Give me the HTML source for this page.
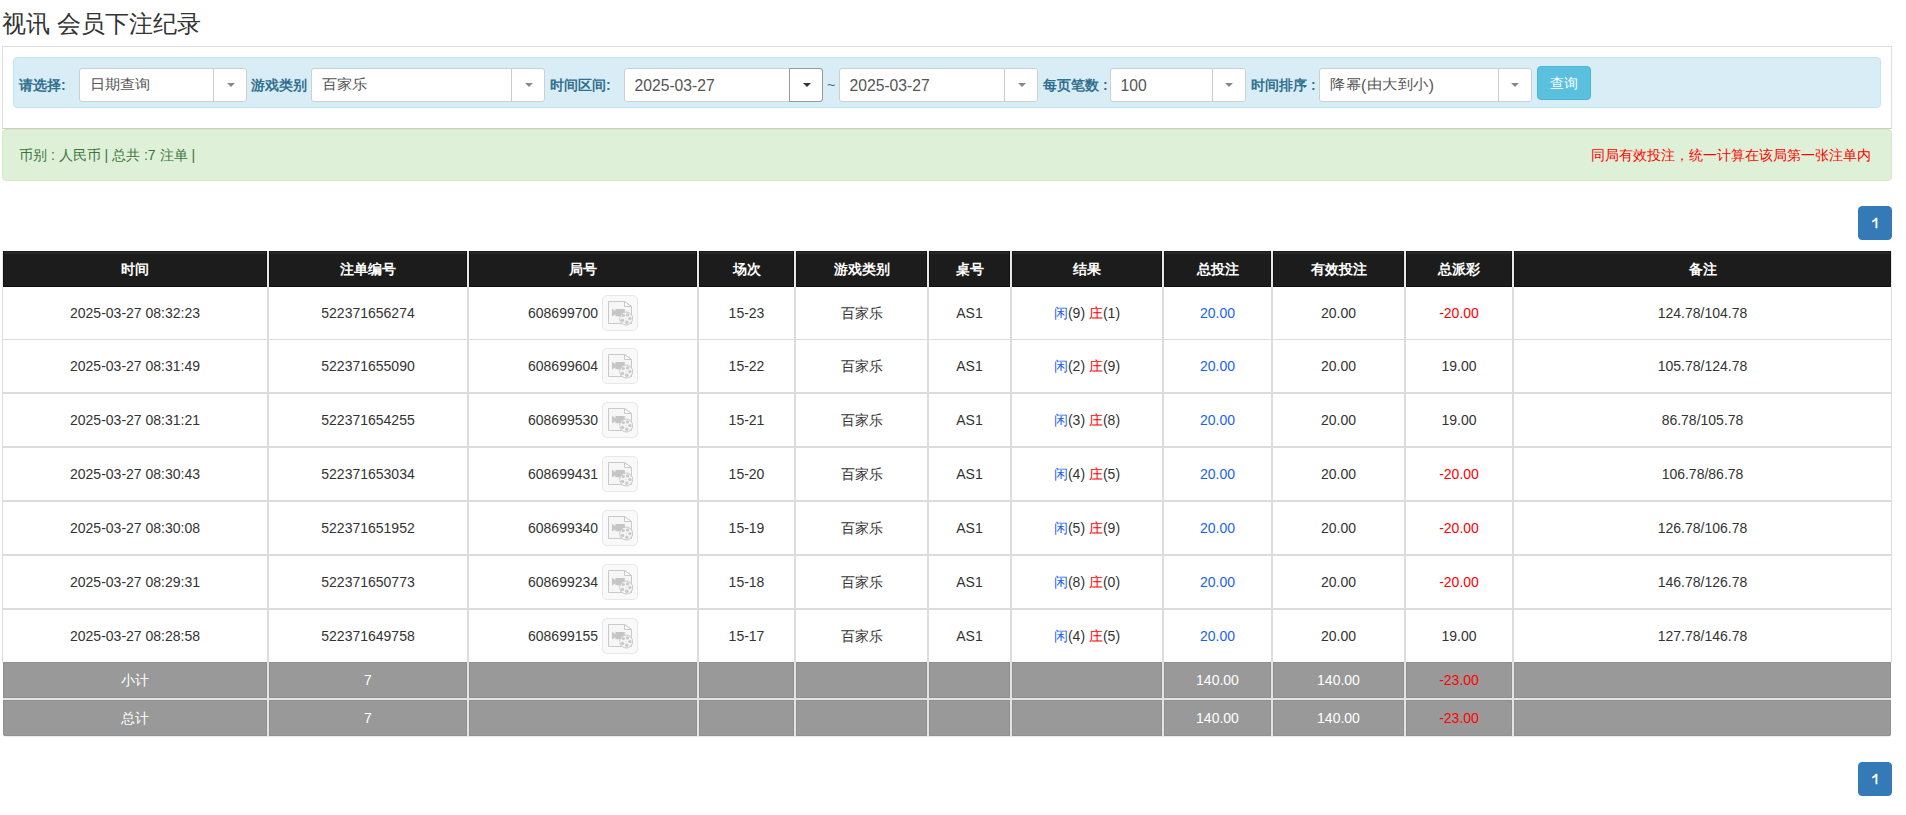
<!DOCTYPE html>
<html><head><meta charset="utf-8">
<style>
*{box-sizing:border-box}
html,body{margin:0;padding:0;background:#fff}
body{width:1906px;height:815px;position:relative;overflow:hidden;font-family:"Liberation Sans",sans-serif;font-size:14px;color:#333}
.abs{position:absolute}
#title{left:2px;top:7px;font-size:24px;line-height:34px;color:#333;white-space:nowrap}
#panel{left:2px;top:46px;width:1890px;height:83px;border:1px solid #ddd;border-bottom-color:#ccc}
#info{left:13px;top:57px;width:1868px;height:51px;background:#d9edf7;border:1px solid #bce8f1;border-radius:4px}
.lbl{position:absolute;top:77px;font-size:14px;font-weight:bold;color:#31708f;line-height:17px;white-space:nowrap}
.sel{position:absolute;top:68px;height:34px;background:#fff;border:1px solid #cfcfcf;border-radius:3px}
.sel .t{position:absolute;left:9.5px;top:0.5px;line-height:32px;font-size:15.7px;color:#555;white-space:nowrap}
.sel .cj{font-size:15px;display:inline-block;transform:translateY(-1.5px) scaleY(.92)}
.sel .d{position:absolute;top:-1px;bottom:-1px;width:1px;background:#ccc}
.sel .a{position:absolute;top:14px;width:0;height:0;border-left:4px solid transparent;border-right:4px solid transparent;border-top:4px solid #888}
.fb{position:absolute;left:164px;top:-1px;width:34px;height:34px;border:1px solid #9a9a9a;border-radius:0 3px 3px 0}
#btnq{left:1537px;top:66px;width:54px;height:34px;background:#5bc0de;border:1px solid #46b8da;border-radius:4px;color:#fff;font-size:14px;line-height:32px;text-align:center}
#succ{left:2px;top:129px;width:1890px;height:52px;background:#dff0d8;border:1px solid #d6e9c6;border-radius:4px;color:#3c763d}
#succ .l{position:absolute;left:16px;top:17px;line-height:16px;white-space:nowrap}
#succ .r{position:absolute;right:20px;top:17px;line-height:16px;color:#f00;white-space:nowrap}
.pg{position:absolute;left:1858px;width:34px;height:34px;background:#337ab7;border:1px solid #337ab7;border-radius:4px;color:#fff;font-weight:normal;-webkit-text-stroke:0.4px #fff;text-align:center;line-height:32px;font-size:14px}
.c{position:absolute;text-align:center;white-space:nowrap;font-size:14px}
.th{background:#1c1c1c;color:#fff;font-weight:bold;box-shadow:inset 1px 0 0 #141414,inset -1px 0 0 #141414,inset 0 1px 0 #1c1c1c,inset 0 3px 0 #272727,inset 0 -1px 0 #0e0e0e}
.td{background:#fff;color:#333}
.tf{background:#999;color:#fff;box-shadow:inset 1px 0 0 #909090,inset -1px 0 0 #909090,inset 0 1px 0 #8f8f8f,inset 0 -1px 0 #909090}
.bl{color:#1a62f2}
.rd{color:#f00}
.num{position:absolute;left:59px;top:0}
.ib{position:absolute;left:133px;top:8px;width:36px;height:36px;background:#f9f9f9;border:1px solid #e8e8e8;border-radius:5px;line-height:0}
</style></head><body>
<div id="title" class="abs">视讯 会员下注纪录</div>
<div id="panel" class="abs"></div>
<div id="info" class="abs"></div>
<div class="lbl" style="left:19px">请选择:</div>
<div class="sel" style="left:79px;width:168px"><span class="t cj">日期查询</span><span class="d" style="left:133px"></span><span class="a" style="left:147px"></span></div>
<div class="lbl" style="left:251px">游戏类别</div>
<div class="sel" style="left:311px;width:234px"><span class="t cj">百家乐</span><span class="d" style="left:199px"></span><span class="a" style="left:213px"></span></div>
<div class="lbl" style="left:550px">时间区间:</div>
<div class="sel" style="left:624px;width:199px"><span class="t">2025-03-27</span><span class="fb"></span><span class="a" style="left:178px;border-top-color:#333"></span></div>
<div class="abs" style="left:827px;top:77px;color:#31708f;font-size:14px;line-height:17px">~</div>
<div class="sel" style="left:839px;width:199px"><span class="t">2025-03-27</span><span class="d" style="left:164px"></span><span class="a" style="left:178px"></span></div>
<div class="lbl" style="left:1043px">每页笔数 :</div>
<div class="sel" style="left:1110px;width:136px"><span class="t">100</span><span class="d" style="left:101px"></span><span class="a" style="left:114px"></span></div>
<div class="lbl" style="left:1251px">时间排序 :</div>
<div class="sel" style="left:1319px;width:213px"><span class="t" style="left:10px;letter-spacing:0.5px"><span class="cj">降幂</span>(<span class="cj">由大到小</span>)</span><span class="d" style="left:178px"></span><span class="a" style="left:191px"></span></div>
<div id="btnq" class="abs">查询</div>
<div id="succ" class="abs"><span class="l">币别 : 人民币 | 总共 :7 注单 |</span><span class="r">同局有效投注，统一计算在该局第一张注单内</span></div>
<div class="pg" style="top:206px"><svg width="34" height="34" style="position:absolute;left:-1px;top:-1px"><path d="M17.7 11.8H19.4V22.2H17.5V14.8Q16.2 15.9 14.2 16.4V14.8Q16.4 14 17.7 11.8Z" fill="#fff"/></svg></div>
<!--TABLE-->
<div class="abs" style="left:2px;top:251px;width:1890px;height:36px;background:#e8e8e8"></div>
<div class="abs" style="left:2px;top:287px;width:1890px;height:375px;background:#dcdcdc"></div>
<div class="abs" style="left:3px;top:662px;width:1888px;height:74px;background:#e4e4e4;border-radius:0 0 3px 3px;box-shadow:0 1px 1px rgba(0,0,0,.08)"></div>
<div class="c th" style="left:3px;width:264px;top:251px;height:36px;line-height:36px">时间</div>
<div class="c th" style="left:269px;width:198px;top:251px;height:36px;line-height:36px">注单编号</div>
<div class="c th" style="left:469px;width:228px;top:251px;height:36px;line-height:36px">局号</div>
<div class="c th" style="left:699px;width:95px;top:251px;height:36px;line-height:36px">场次</div>
<div class="c th" style="left:796px;width:131px;top:251px;height:36px;line-height:36px">游戏类别</div>
<div class="c th" style="left:929px;width:81px;top:251px;height:36px;line-height:36px">桌号</div>
<div class="c th" style="left:1012px;width:150px;top:251px;height:36px;line-height:36px">结果</div>
<div class="c th" style="left:1164px;width:107px;top:251px;height:36px;line-height:36px">总投注</div>
<div class="c th" style="left:1273px;width:131px;top:251px;height:36px;line-height:36px">有效投注</div>
<div class="c th" style="left:1406px;width:106px;top:251px;height:36px;line-height:36px">总派彩</div>
<div class="c th" style="left:1514px;width:377px;top:251px;height:36px;line-height:36px">备注</div>
<div class="c td" style="left:3px;width:264px;top:287px;height:52px;line-height:52px">2025-03-27 08:32:23</div>
<div class="c td" style="left:269px;width:198px;top:287px;height:52px;line-height:52px">522371656274</div>
<div class="c td" style="left:469px;width:228px;top:287px;height:52px;line-height:52px"><span class="num">608699700</span><span class="ib"><svg width="28" height="28" viewBox="0 0 28 28" style="position:absolute;left:5px;top:5px"><path d="M0.5 0.5H16.5L23.5 5.5V22.5H0.5Z" fill="#f6f6f6" stroke="#c9c9c9" stroke-width="1"/><path d="M16.5 0.5V5.5H23.5Z" fill="#fdfdfd" stroke="#c9c9c9" stroke-width="1" stroke-linejoin="round"/><path d="M4 8H4.6L7.4 10.2V8H16.8V15.2H7.4V13.2L4.6 15.2H4Z" fill="#c5c5c5"/><circle cx="18.2" cy="17.5" r="6.5" fill="#f6f6f6" stroke="#c8c8c8" stroke-width="1"/><circle cx="15.3" cy="14.6" r="1.7" fill="#c9c9c9"/><circle cx="19.6" cy="13.9" r="1.7" fill="#c9c9c9"/><circle cx="21.9" cy="17.6" r="1.7" fill="#c9c9c9"/><circle cx="18.8" cy="21.2" r="1.7" fill="#c9c9c9"/><circle cx="14.6" cy="19.4" r="1.7" fill="#c9c9c9"/><circle cx="18" cy="17.5" r="0.6" fill="#cfcfcf"/></svg></span></div>
<div class="c td" style="left:699px;width:95px;top:287px;height:52px;line-height:52px">15-23</div>
<div class="c td" style="left:796px;width:131px;top:287px;height:52px;line-height:52px">百家乐</div>
<div class="c td" style="left:929px;width:81px;top:287px;height:52px;line-height:52px">AS1</div>
<div class="c td" style="left:1012px;width:150px;top:287px;height:52px;line-height:52px"><span class="bl">闲</span>(9) <span class="rd">庄</span>(1)</div>
<div class="c td" style="left:1164px;width:107px;top:287px;height:52px;line-height:52px"><span class="bl">20.00</span></div>
<div class="c td" style="left:1273px;width:131px;top:287px;height:52px;line-height:52px">20.00</div>
<div class="c td" style="left:1406px;width:106px;top:287px;height:52px;line-height:52px"><span class="rd">-20.00</span></div>
<div class="c td" style="left:1514px;width:377px;top:287px;height:52px;line-height:52px">124.78/104.78</div>
<div class="c td" style="left:3px;width:264px;top:340px;height:52px;line-height:52px">2025-03-27 08:31:49</div>
<div class="c td" style="left:269px;width:198px;top:340px;height:52px;line-height:52px">522371655090</div>
<div class="c td" style="left:469px;width:228px;top:340px;height:52px;line-height:52px"><span class="num">608699604</span><span class="ib"><svg width="28" height="28" viewBox="0 0 28 28" style="position:absolute;left:5px;top:5px"><path d="M0.5 0.5H16.5L23.5 5.5V22.5H0.5Z" fill="#f6f6f6" stroke="#c9c9c9" stroke-width="1"/><path d="M16.5 0.5V5.5H23.5Z" fill="#fdfdfd" stroke="#c9c9c9" stroke-width="1" stroke-linejoin="round"/><path d="M4 8H4.6L7.4 10.2V8H16.8V15.2H7.4V13.2L4.6 15.2H4Z" fill="#c5c5c5"/><circle cx="18.2" cy="17.5" r="6.5" fill="#f6f6f6" stroke="#c8c8c8" stroke-width="1"/><circle cx="15.3" cy="14.6" r="1.7" fill="#c9c9c9"/><circle cx="19.6" cy="13.9" r="1.7" fill="#c9c9c9"/><circle cx="21.9" cy="17.6" r="1.7" fill="#c9c9c9"/><circle cx="18.8" cy="21.2" r="1.7" fill="#c9c9c9"/><circle cx="14.6" cy="19.4" r="1.7" fill="#c9c9c9"/><circle cx="18" cy="17.5" r="0.6" fill="#cfcfcf"/></svg></span></div>
<div class="c td" style="left:699px;width:95px;top:340px;height:52px;line-height:52px">15-22</div>
<div class="c td" style="left:796px;width:131px;top:340px;height:52px;line-height:52px">百家乐</div>
<div class="c td" style="left:929px;width:81px;top:340px;height:52px;line-height:52px">AS1</div>
<div class="c td" style="left:1012px;width:150px;top:340px;height:52px;line-height:52px"><span class="bl">闲</span>(2) <span class="rd">庄</span>(9)</div>
<div class="c td" style="left:1164px;width:107px;top:340px;height:52px;line-height:52px"><span class="bl">20.00</span></div>
<div class="c td" style="left:1273px;width:131px;top:340px;height:52px;line-height:52px">20.00</div>
<div class="c td" style="left:1406px;width:106px;top:340px;height:52px;line-height:52px">19.00</div>
<div class="c td" style="left:1514px;width:377px;top:340px;height:52px;line-height:52px">105.78/124.78</div>
<div class="c td" style="left:3px;width:264px;top:394px;height:52px;line-height:52px">2025-03-27 08:31:21</div>
<div class="c td" style="left:269px;width:198px;top:394px;height:52px;line-height:52px">522371654255</div>
<div class="c td" style="left:469px;width:228px;top:394px;height:52px;line-height:52px"><span class="num">608699530</span><span class="ib"><svg width="28" height="28" viewBox="0 0 28 28" style="position:absolute;left:5px;top:5px"><path d="M0.5 0.5H16.5L23.5 5.5V22.5H0.5Z" fill="#f6f6f6" stroke="#c9c9c9" stroke-width="1"/><path d="M16.5 0.5V5.5H23.5Z" fill="#fdfdfd" stroke="#c9c9c9" stroke-width="1" stroke-linejoin="round"/><path d="M4 8H4.6L7.4 10.2V8H16.8V15.2H7.4V13.2L4.6 15.2H4Z" fill="#c5c5c5"/><circle cx="18.2" cy="17.5" r="6.5" fill="#f6f6f6" stroke="#c8c8c8" stroke-width="1"/><circle cx="15.3" cy="14.6" r="1.7" fill="#c9c9c9"/><circle cx="19.6" cy="13.9" r="1.7" fill="#c9c9c9"/><circle cx="21.9" cy="17.6" r="1.7" fill="#c9c9c9"/><circle cx="18.8" cy="21.2" r="1.7" fill="#c9c9c9"/><circle cx="14.6" cy="19.4" r="1.7" fill="#c9c9c9"/><circle cx="18" cy="17.5" r="0.6" fill="#cfcfcf"/></svg></span></div>
<div class="c td" style="left:699px;width:95px;top:394px;height:52px;line-height:52px">15-21</div>
<div class="c td" style="left:796px;width:131px;top:394px;height:52px;line-height:52px">百家乐</div>
<div class="c td" style="left:929px;width:81px;top:394px;height:52px;line-height:52px">AS1</div>
<div class="c td" style="left:1012px;width:150px;top:394px;height:52px;line-height:52px"><span class="bl">闲</span>(3) <span class="rd">庄</span>(8)</div>
<div class="c td" style="left:1164px;width:107px;top:394px;height:52px;line-height:52px"><span class="bl">20.00</span></div>
<div class="c td" style="left:1273px;width:131px;top:394px;height:52px;line-height:52px">20.00</div>
<div class="c td" style="left:1406px;width:106px;top:394px;height:52px;line-height:52px">19.00</div>
<div class="c td" style="left:1514px;width:377px;top:394px;height:52px;line-height:52px">86.78/105.78</div>
<div class="c td" style="left:3px;width:264px;top:448px;height:52px;line-height:52px">2025-03-27 08:30:43</div>
<div class="c td" style="left:269px;width:198px;top:448px;height:52px;line-height:52px">522371653034</div>
<div class="c td" style="left:469px;width:228px;top:448px;height:52px;line-height:52px"><span class="num">608699431</span><span class="ib"><svg width="28" height="28" viewBox="0 0 28 28" style="position:absolute;left:5px;top:5px"><path d="M0.5 0.5H16.5L23.5 5.5V22.5H0.5Z" fill="#f6f6f6" stroke="#c9c9c9" stroke-width="1"/><path d="M16.5 0.5V5.5H23.5Z" fill="#fdfdfd" stroke="#c9c9c9" stroke-width="1" stroke-linejoin="round"/><path d="M4 8H4.6L7.4 10.2V8H16.8V15.2H7.4V13.2L4.6 15.2H4Z" fill="#c5c5c5"/><circle cx="18.2" cy="17.5" r="6.5" fill="#f6f6f6" stroke="#c8c8c8" stroke-width="1"/><circle cx="15.3" cy="14.6" r="1.7" fill="#c9c9c9"/><circle cx="19.6" cy="13.9" r="1.7" fill="#c9c9c9"/><circle cx="21.9" cy="17.6" r="1.7" fill="#c9c9c9"/><circle cx="18.8" cy="21.2" r="1.7" fill="#c9c9c9"/><circle cx="14.6" cy="19.4" r="1.7" fill="#c9c9c9"/><circle cx="18" cy="17.5" r="0.6" fill="#cfcfcf"/></svg></span></div>
<div class="c td" style="left:699px;width:95px;top:448px;height:52px;line-height:52px">15-20</div>
<div class="c td" style="left:796px;width:131px;top:448px;height:52px;line-height:52px">百家乐</div>
<div class="c td" style="left:929px;width:81px;top:448px;height:52px;line-height:52px">AS1</div>
<div class="c td" style="left:1012px;width:150px;top:448px;height:52px;line-height:52px"><span class="bl">闲</span>(4) <span class="rd">庄</span>(5)</div>
<div class="c td" style="left:1164px;width:107px;top:448px;height:52px;line-height:52px"><span class="bl">20.00</span></div>
<div class="c td" style="left:1273px;width:131px;top:448px;height:52px;line-height:52px">20.00</div>
<div class="c td" style="left:1406px;width:106px;top:448px;height:52px;line-height:52px"><span class="rd">-20.00</span></div>
<div class="c td" style="left:1514px;width:377px;top:448px;height:52px;line-height:52px">106.78/86.78</div>
<div class="c td" style="left:3px;width:264px;top:502px;height:52px;line-height:52px">2025-03-27 08:30:08</div>
<div class="c td" style="left:269px;width:198px;top:502px;height:52px;line-height:52px">522371651952</div>
<div class="c td" style="left:469px;width:228px;top:502px;height:52px;line-height:52px"><span class="num">608699340</span><span class="ib"><svg width="28" height="28" viewBox="0 0 28 28" style="position:absolute;left:5px;top:5px"><path d="M0.5 0.5H16.5L23.5 5.5V22.5H0.5Z" fill="#f6f6f6" stroke="#c9c9c9" stroke-width="1"/><path d="M16.5 0.5V5.5H23.5Z" fill="#fdfdfd" stroke="#c9c9c9" stroke-width="1" stroke-linejoin="round"/><path d="M4 8H4.6L7.4 10.2V8H16.8V15.2H7.4V13.2L4.6 15.2H4Z" fill="#c5c5c5"/><circle cx="18.2" cy="17.5" r="6.5" fill="#f6f6f6" stroke="#c8c8c8" stroke-width="1"/><circle cx="15.3" cy="14.6" r="1.7" fill="#c9c9c9"/><circle cx="19.6" cy="13.9" r="1.7" fill="#c9c9c9"/><circle cx="21.9" cy="17.6" r="1.7" fill="#c9c9c9"/><circle cx="18.8" cy="21.2" r="1.7" fill="#c9c9c9"/><circle cx="14.6" cy="19.4" r="1.7" fill="#c9c9c9"/><circle cx="18" cy="17.5" r="0.6" fill="#cfcfcf"/></svg></span></div>
<div class="c td" style="left:699px;width:95px;top:502px;height:52px;line-height:52px">15-19</div>
<div class="c td" style="left:796px;width:131px;top:502px;height:52px;line-height:52px">百家乐</div>
<div class="c td" style="left:929px;width:81px;top:502px;height:52px;line-height:52px">AS1</div>
<div class="c td" style="left:1012px;width:150px;top:502px;height:52px;line-height:52px"><span class="bl">闲</span>(5) <span class="rd">庄</span>(9)</div>
<div class="c td" style="left:1164px;width:107px;top:502px;height:52px;line-height:52px"><span class="bl">20.00</span></div>
<div class="c td" style="left:1273px;width:131px;top:502px;height:52px;line-height:52px">20.00</div>
<div class="c td" style="left:1406px;width:106px;top:502px;height:52px;line-height:52px"><span class="rd">-20.00</span></div>
<div class="c td" style="left:1514px;width:377px;top:502px;height:52px;line-height:52px">126.78/106.78</div>
<div class="c td" style="left:3px;width:264px;top:556px;height:52px;line-height:52px">2025-03-27 08:29:31</div>
<div class="c td" style="left:269px;width:198px;top:556px;height:52px;line-height:52px">522371650773</div>
<div class="c td" style="left:469px;width:228px;top:556px;height:52px;line-height:52px"><span class="num">608699234</span><span class="ib"><svg width="28" height="28" viewBox="0 0 28 28" style="position:absolute;left:5px;top:5px"><path d="M0.5 0.5H16.5L23.5 5.5V22.5H0.5Z" fill="#f6f6f6" stroke="#c9c9c9" stroke-width="1"/><path d="M16.5 0.5V5.5H23.5Z" fill="#fdfdfd" stroke="#c9c9c9" stroke-width="1" stroke-linejoin="round"/><path d="M4 8H4.6L7.4 10.2V8H16.8V15.2H7.4V13.2L4.6 15.2H4Z" fill="#c5c5c5"/><circle cx="18.2" cy="17.5" r="6.5" fill="#f6f6f6" stroke="#c8c8c8" stroke-width="1"/><circle cx="15.3" cy="14.6" r="1.7" fill="#c9c9c9"/><circle cx="19.6" cy="13.9" r="1.7" fill="#c9c9c9"/><circle cx="21.9" cy="17.6" r="1.7" fill="#c9c9c9"/><circle cx="18.8" cy="21.2" r="1.7" fill="#c9c9c9"/><circle cx="14.6" cy="19.4" r="1.7" fill="#c9c9c9"/><circle cx="18" cy="17.5" r="0.6" fill="#cfcfcf"/></svg></span></div>
<div class="c td" style="left:699px;width:95px;top:556px;height:52px;line-height:52px">15-18</div>
<div class="c td" style="left:796px;width:131px;top:556px;height:52px;line-height:52px">百家乐</div>
<div class="c td" style="left:929px;width:81px;top:556px;height:52px;line-height:52px">AS1</div>
<div class="c td" style="left:1012px;width:150px;top:556px;height:52px;line-height:52px"><span class="bl">闲</span>(8) <span class="rd">庄</span>(0)</div>
<div class="c td" style="left:1164px;width:107px;top:556px;height:52px;line-height:52px"><span class="bl">20.00</span></div>
<div class="c td" style="left:1273px;width:131px;top:556px;height:52px;line-height:52px">20.00</div>
<div class="c td" style="left:1406px;width:106px;top:556px;height:52px;line-height:52px"><span class="rd">-20.00</span></div>
<div class="c td" style="left:1514px;width:377px;top:556px;height:52px;line-height:52px">146.78/126.78</div>
<div class="c td" style="left:3px;width:264px;top:610px;height:52px;line-height:52px">2025-03-27 08:28:58</div>
<div class="c td" style="left:269px;width:198px;top:610px;height:52px;line-height:52px">522371649758</div>
<div class="c td" style="left:469px;width:228px;top:610px;height:52px;line-height:52px"><span class="num">608699155</span><span class="ib"><svg width="28" height="28" viewBox="0 0 28 28" style="position:absolute;left:5px;top:5px"><path d="M0.5 0.5H16.5L23.5 5.5V22.5H0.5Z" fill="#f6f6f6" stroke="#c9c9c9" stroke-width="1"/><path d="M16.5 0.5V5.5H23.5Z" fill="#fdfdfd" stroke="#c9c9c9" stroke-width="1" stroke-linejoin="round"/><path d="M4 8H4.6L7.4 10.2V8H16.8V15.2H7.4V13.2L4.6 15.2H4Z" fill="#c5c5c5"/><circle cx="18.2" cy="17.5" r="6.5" fill="#f6f6f6" stroke="#c8c8c8" stroke-width="1"/><circle cx="15.3" cy="14.6" r="1.7" fill="#c9c9c9"/><circle cx="19.6" cy="13.9" r="1.7" fill="#c9c9c9"/><circle cx="21.9" cy="17.6" r="1.7" fill="#c9c9c9"/><circle cx="18.8" cy="21.2" r="1.7" fill="#c9c9c9"/><circle cx="14.6" cy="19.4" r="1.7" fill="#c9c9c9"/><circle cx="18" cy="17.5" r="0.6" fill="#cfcfcf"/></svg></span></div>
<div class="c td" style="left:699px;width:95px;top:610px;height:52px;line-height:52px">15-17</div>
<div class="c td" style="left:796px;width:131px;top:610px;height:52px;line-height:52px">百家乐</div>
<div class="c td" style="left:929px;width:81px;top:610px;height:52px;line-height:52px">AS1</div>
<div class="c td" style="left:1012px;width:150px;top:610px;height:52px;line-height:52px"><span class="bl">闲</span>(4) <span class="rd">庄</span>(5)</div>
<div class="c td" style="left:1164px;width:107px;top:610px;height:52px;line-height:52px"><span class="bl">20.00</span></div>
<div class="c td" style="left:1273px;width:131px;top:610px;height:52px;line-height:52px">20.00</div>
<div class="c td" style="left:1406px;width:106px;top:610px;height:52px;line-height:52px">19.00</div>
<div class="c td" style="left:1514px;width:377px;top:610px;height:52px;line-height:52px">127.78/146.78</div>
<div class="c tf" style="left:3px;width:264px;top:662px;height:36px;line-height:36px">小计</div>
<div class="c tf" style="left:269px;width:198px;top:662px;height:36px;line-height:36px">7</div>
<div class="c tf" style="left:469px;width:228px;top:662px;height:36px;line-height:36px"></div>
<div class="c tf" style="left:699px;width:95px;top:662px;height:36px;line-height:36px"></div>
<div class="c tf" style="left:796px;width:131px;top:662px;height:36px;line-height:36px"></div>
<div class="c tf" style="left:929px;width:81px;top:662px;height:36px;line-height:36px"></div>
<div class="c tf" style="left:1012px;width:150px;top:662px;height:36px;line-height:36px"></div>
<div class="c tf" style="left:1164px;width:107px;top:662px;height:36px;line-height:36px">140.00</div>
<div class="c tf" style="left:1273px;width:131px;top:662px;height:36px;line-height:36px">140.00</div>
<div class="c tf" style="left:1406px;width:106px;top:662px;height:36px;line-height:36px"><span class="rd">-23.00</span></div>
<div class="c tf" style="left:1514px;width:377px;top:662px;height:36px;line-height:36px"></div>
<div class="c tf" style="border-bottom-left-radius:3px;left:3px;width:264px;top:700px;height:36px;line-height:36px">总计</div>
<div class="c tf" style="left:269px;width:198px;top:700px;height:36px;line-height:36px">7</div>
<div class="c tf" style="left:469px;width:228px;top:700px;height:36px;line-height:36px"></div>
<div class="c tf" style="left:699px;width:95px;top:700px;height:36px;line-height:36px"></div>
<div class="c tf" style="left:796px;width:131px;top:700px;height:36px;line-height:36px"></div>
<div class="c tf" style="left:929px;width:81px;top:700px;height:36px;line-height:36px"></div>
<div class="c tf" style="left:1012px;width:150px;top:700px;height:36px;line-height:36px"></div>
<div class="c tf" style="left:1164px;width:107px;top:700px;height:36px;line-height:36px">140.00</div>
<div class="c tf" style="left:1273px;width:131px;top:700px;height:36px;line-height:36px">140.00</div>
<div class="c tf" style="left:1406px;width:106px;top:700px;height:36px;line-height:36px"><span class="rd">-23.00</span></div>
<div class="c tf" style="border-bottom-right-radius:3px;left:1514px;width:377px;top:700px;height:36px;line-height:36px"></div>
<!--/TABLE-->
<div class="pg" style="top:762px"><svg width="34" height="34" style="position:absolute;left:-1px;top:-1px"><path d="M17.7 11.8H19.4V22.2H17.5V14.8Q16.2 15.9 14.2 16.4V14.8Q16.4 14 17.7 11.8Z" fill="#fff"/></svg></div>
</body></html>
